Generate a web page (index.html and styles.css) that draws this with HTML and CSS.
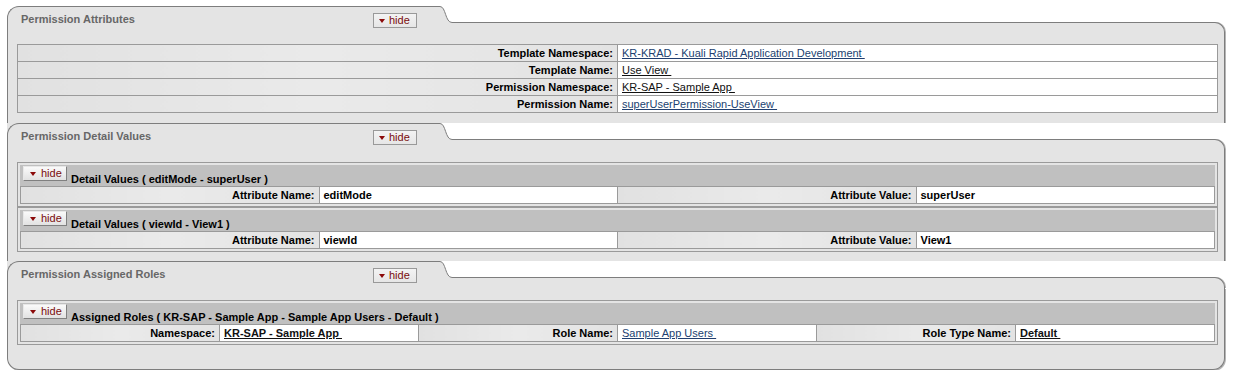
FILE: index.html
```html
<!DOCTYPE html>
<html lang="en">
<head>
    <meta charset="UTF-8">
    <title>Permission Inquiry</title>
    <link rel="stylesheet" href="styles.css">
</head>
<body>
    <div class="tabs">

        <!-- Permission Attributes -->
        <div class="section">
            <div class="tab-head">
                <div class="tab-wrap">
                    <div class="tab">
                        <span class="tab-title">Permission Attributes</span>
                        <button class="btn-hide"><span class="tri"></span>hide</button>
                    </div>
                </div>
                <div class="tab-curve">
                    <svg width="12" height="17" viewBox="0 0 12 17">
                        <path d="M0 0.5 C6 0.5 5 16.5 12 16.5 L12 17 L0 17 Z" fill="#e4e4e4"/>
                        <path d="M0 0.5 C6 0.5 5 16.5 12 16.5" fill="none" stroke="#7d7d7d" stroke-width="1"/>
                    </svg>
                    <div class="tab-curve-fill"></div>
                </div>
                <div class="tab-rest">
                    <div class="tab-gap"></div>
                    <div class="tab-edge"></div>
                </div>
            </div>
            <div class="tab-body">
                <table class="attr-table">
                    <tr>
                        <th>Template Namespace:</th>
                        <td><a href="#" class="link">KR-KRAD - Kuali Rapid Application Development&nbsp;</a></td>
                    </tr>
                    <tr>
                        <th>Template Name:</th>
                        <td><a href="#" class="link dark">Use View&nbsp;</a></td>
                    </tr>
                    <tr>
                        <th>Permission Namespace:</th>
                        <td><a href="#" class="link dark">KR-SAP - Sample App&nbsp;</a></td>
                    </tr>
                    <tr>
                        <th>Permission Name:</th>
                        <td><a href="#" class="link">superUserPermission-UseView&nbsp;</a></td>
                    </tr>
                </table>
            </div>
        </div>

        <!-- Permission Detail Values -->
        <div class="section">
            <div class="tab-head">
                <div class="tab-wrap">
                    <div class="tab">
                        <span class="tab-title">Permission Detail Values</span>
                        <button class="btn-hide"><span class="tri"></span>hide</button>
                    </div>
                </div>
                <div class="tab-curve">
                    <svg width="12" height="17" viewBox="0 0 12 17">
                        <path d="M0 0.5 C6 0.5 5 16.5 12 16.5 L12 17 L0 17 Z" fill="#e4e4e4"/>
                        <path d="M0 0.5 C6 0.5 5 16.5 12 16.5" fill="none" stroke="#7d7d7d" stroke-width="1"/>
                    </svg>
                    <div class="tab-curve-fill"></div>
                </div>
                <div class="tab-rest">
                    <div class="tab-gap"></div>
                    <div class="tab-edge"></div>
                </div>
            </div>
            <div class="tab-body">
                <div class="sub">
                    <div class="sub-head">
                        <button class="btn-sub"><span class="tri"></span>hide</button>
                        <span class="sub-title">Detail Values ( editMode - superUser )</span>
                    </div>
                    <table class="sub-table">
                        <tr>
                            <th>Attribute Name:</th>
                            <td class="val">editMode</td>
                            <th>Attribute Value:</th>
                            <td class="val">superUser</td>
                        </tr>
                    </table>
                </div>
                <div class="sub">
                    <div class="sub-head">
                        <button class="btn-sub"><span class="tri"></span>hide</button>
                        <span class="sub-title">Detail Values ( viewId - View1 )</span>
                    </div>
                    <table class="sub-table">
                        <tr>
                            <th>Attribute Name:</th>
                            <td class="val">viewId</td>
                            <th>Attribute Value:</th>
                            <td class="val">View1</td>
                        </tr>
                    </table>
                </div>
            </div>
        </div>

        <!-- Permission Assigned Roles -->
        <div class="section last">
            <div class="tab-head">
                <div class="tab-wrap">
                    <div class="tab">
                        <span class="tab-title">Permission Assigned Roles</span>
                        <button class="btn-hide"><span class="tri"></span>hide</button>
                    </div>
                </div>
                <div class="tab-curve">
                    <svg width="12" height="17" viewBox="0 0 12 17">
                        <path d="M0 0.5 C6 0.5 5 16.5 12 16.5 L12 17 L0 17 Z" fill="#e4e4e4"/>
                        <path d="M0 0.5 C6 0.5 5 16.5 12 16.5" fill="none" stroke="#7d7d7d" stroke-width="1"/>
                    </svg>
                    <div class="tab-curve-fill"></div>
                </div>
                <div class="tab-rest">
                    <div class="tab-gap"></div>
                    <div class="tab-edge"></div>
                </div>
            </div>
            <div class="tab-body">
                <div class="sub">
                    <div class="sub-head">
                        <button class="btn-sub"><span class="tri"></span>hide</button>
                        <span class="sub-title">Assigned Roles ( KR-SAP - Sample App - Sample App Users - Default )</span>
                    </div>
                    <table class="sub-table six">
                        <tr>
                            <th>Namespace:</th>
                            <td><a href="#" class="link dark bold">KR-SAP - Sample App&nbsp;</a></td>
                            <th>Role Name:</th>
                            <td><a href="#" class="link">Sample App Users&nbsp;</a></td>
                            <th>Role Type Name:</th>
                            <td><a href="#" class="link dark bold">Default&nbsp;</a></td>
                        </tr>
                    </table>
                </div>
            </div>
        </div>

    </div>
</body>
</html>
```

FILE: styles.css
```css
:root {
    --panel-color: #e4e4e4;
    --line-color: #7d7d7d;
    --cell-line: #9a9a9a;
    --head-color: #c0c0c0;
    --title-color: #676767;
    --hide-color: #7a0c0c;
    --link-color: #213f70;
}

* {
    box-sizing: border-box;
}

body {
    margin: 0;
    background-color: #ffffff;
    color: #000000;
    font-family: "Liberation Sans", Arial, sans-serif;
    font-size: 11px;
}

.tabs {
    width: 1218px;
    margin: 6px 0 0 7px;
}

/* tab header with the curved shoulder */
.tab-head {
    display: flex;
    height: 27px;
}

.tab-wrap {
    flex: none;
    width: 433px;
}

.section + .section .tab-wrap {
    background-color: var(--panel-color);
}

.tab {
    height: 100%;
    display: flex;
    align-items: flex-start;
    padding: 6px 23px 0 13px;
    background-color: var(--panel-color);
    border-top: 1px solid var(--line-color);
    border-left: 1px solid var(--line-color);
    border-top-left-radius: 12px;
}

.tab-title {
    flex: 1;
    font-weight: bold;
    line-height: 13px;
    color: var(--title-color);
}

.tab-curve {
    flex: none;
    width: 12px;
    display: flex;
    flex-direction: column;
}

.tab-curve svg {
    display: block;
}

.tab-curve-fill {
    flex: 1;
    background-color: var(--panel-color);
}

.tab-rest {
    flex: 1;
    display: flex;
    flex-direction: column;
}

.tab-gap {
    height: 16px;
}

.tab-edge {
    flex: 1;
    background-color: var(--panel-color);
    border-top: 1px solid var(--line-color);
    border-right: 1px solid var(--line-color);
    border-top-right-radius: 10px;
    box-shadow: 1px 0 0 #b5b5b5;
}

.tab-body {
    padding: 11px 6px 10px 9px;
    background-color: var(--panel-color);
    border-left: 1px solid var(--line-color);
    border-right: 1px solid var(--line-color);
    box-shadow: 1px 0 0 #b5b5b5;
}

.section + .section .tab-body {
    padding-top: 12px;
    padding-bottom: 9px;
}

.section.last .tab-body {
    padding-bottom: 24px;
    border-bottom: 1px solid var(--line-color);
    border-bottom-left-radius: 12px;
    border-bottom-right-radius: 12px;
    box-shadow: 1px 1px 0 #b5b5b5;
}

/* hide buttons */
.btn-hide,
.btn-sub {
    display: flex;
    align-items: center;
    width: 44px;
    height: 15px;
    padding: 0 0 0 5px;
    font-family: "Liberation Sans", Arial, sans-serif;
    font-size: 11px;
    line-height: 13px;
    color: var(--hide-color);
    cursor: pointer;
}

.btn-hide {
    flex: none;
    background: linear-gradient(#f3f3f3, #e6e6e6);
    border: 1px solid #999999;
}

.btn-sub {
    padding-left: 6px;
    background: linear-gradient(#fafafa, #e2e2e2);
    border: 1px solid;
    border-color: #e8e8e8 #808080 #808080 #e8e8e8;
}

.tri {
    width: 0;
    height: 0;
    margin-right: 4px;
    border-left: 3.5px solid transparent;
    border-right: 3.5px solid transparent;
    border-top: 4px solid #8b0a0a;
}

.btn-sub .tri {
    margin-right: 5px;
}

/* attribute tables */
table {
    border-collapse: collapse;
    width: 100%;
    table-layout: fixed;
}

th,
td {
    height: 17px;
    padding: 0 4px;
    line-height: 16px;
    font-size: 11px;
    white-space: nowrap;
    overflow: hidden;
    border: 1px solid var(--cell-line);
}

th {
    text-align: right;
    font-weight: bold;
    background: linear-gradient(90deg, #e1e1e1, #eaeaea 50%, #e3e3e3);
}

td {
    text-align: left;
    background-color: #ffffff;
}

td.val {
    font-weight: bold;
}

.link {
    color: var(--link-color);
    text-decoration: underline;
}

.link.dark {
    color: #111111;
}

.link.bold {
    font-weight: bold;
}

/* collapsible sub sections */
.sub {
    padding: 2px;
    border: 1px solid var(--cell-line);
}

.sub-head {
    display: flex;
    align-items: flex-end;
    height: 21px;
    padding: 1px 0 0 3px;
    background-color: var(--head-color);
}

.sub-head .btn-sub {
    align-self: flex-start;
}

.sub-title {
    margin-left: 4px;
    padding-bottom: 0;
    font-weight: bold;
    line-height: 14px;
}
```
